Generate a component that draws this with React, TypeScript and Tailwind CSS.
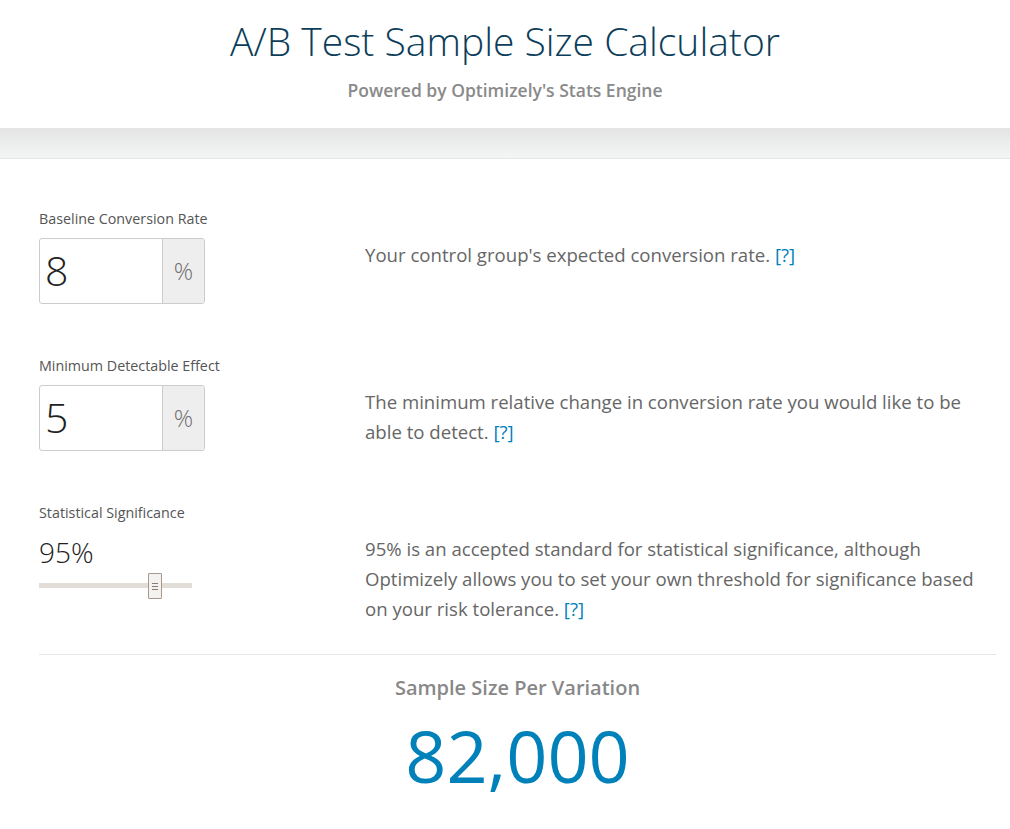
import React from "react";

const font = { fontFamily: "'Open Sans', Lato, sans-serif" };

function Addon({ value }: { value: string }) {
  return (
    <div className="flex w-[166px] h-[66px] border border-[#cccccc] rounded-[3px] overflow-hidden bg-white">
      <div className="flex-1 flex items-center pl-[5px] text-[41px] text-[#222222] font-light">{value}</div>
      <div className="w-[42px] border-l border-[#cccccc] bg-[#eeeeee] flex items-center justify-center text-[24px] text-[#707070] font-light">%</div>
    </div>
  );
}

const Q = () => <span className="text-[#0081ba]">[?]</span>;

export default function App() {
  return (
    <div className="bg-white min-h-[829px]" style={font}>
      <header className="h-[128px] flex flex-col items-center">
        <h1 className="mt-[19px] text-[39px] leading-[44px] font-light text-[#0c3e5a]">A/B Test Sample Size Calculator</h1>
        <p className="mt-[14px] text-[17.5px] font-semibold text-[#8a8a8a]">Powered by Optimizely's Stats Engine</p>
      </header>
      <div className="h-[31px] bg-gradient-to-b from-[#e4e4e4] to-[#f4f5f5] border-b border-[#e6e6e6]" />
      <main className="px-[39px] pr-[14px]">
        <div className="pt-[50px] flex">
          <div className="w-[326px]">
            <div className="text-[14.3px] text-[#555555] leading-[20px]">Baseline Conversion Rate</div>
            <div className="mt-[9px]"><Addon value="8" /></div>
          </div>
          <p className="flex-1 mt-[31px] text-[18.6px] leading-[30px] text-[#666666]">Your control group's expected conversion rate. <Q /></p>
        </div>
        <div className="pt-[52px] flex">
          <div className="w-[326px]">
            <div className="text-[14.3px] text-[#555555] leading-[20px]">Minimum Detectable Effect</div>
            <div className="mt-[9px]"><Addon value="5" /></div>
          </div>
          <p className="flex-1 mt-[31px] text-[18.6px] leading-[30px] text-[#666666]">The minimum relative change in conversion rate you would like to be able to detect. <Q /></p>
        </div>
        <div className="pt-[52px] flex">
          <div className="w-[326px]">
            <div className="text-[14.3px] text-[#555555] leading-[20px]">Statistical Significance</div>
            <div className="mt-[14px] text-[28px] leading-[30px] text-[#222222] font-light">95%</div>
            <div className="relative mt-[6px] w-[153px] h-[26px]">
              <div className="absolute left-0 right-0 top-[10px] h-[5px] bg-[#e2ddd7]" />
              <div className="absolute left-[109px] top-0 w-[14px] h-[26px] bg-[#f4f2f0] border border-[#a8978c] rounded-[1px] flex flex-col items-center justify-center gap-[2px]">
                <div className="w-[6px] h-[1px] bg-[#8a7a70]" />
                <div className="w-[6px] h-[1px] bg-[#8a7a70]" />
                <div className="w-[6px] h-[1px] bg-[#8a7a70]" />
              </div>
            </div>
          </div>
          <p className="flex-1 mt-[31px] text-[18.6px] leading-[30px] text-[#666666]">95% is an accepted standard for statistical significance, although Optimizely allows you to set your own threshold for significance based on your risk tolerance. <Q /></p>
        </div>
        <div className="mt-[30px] border-t border-[#e6e6e6]" />
        <div className="flex flex-col items-center">
          <div className="mt-[18px] text-[20px] text-[#888888] font-semibold">Sample Size Per Variation</div>
          <div className="mt-[12px] text-[72px] leading-[80px] text-[#0081ba]">82,000</div>
        </div>
      </main>
    </div>
  );
}
